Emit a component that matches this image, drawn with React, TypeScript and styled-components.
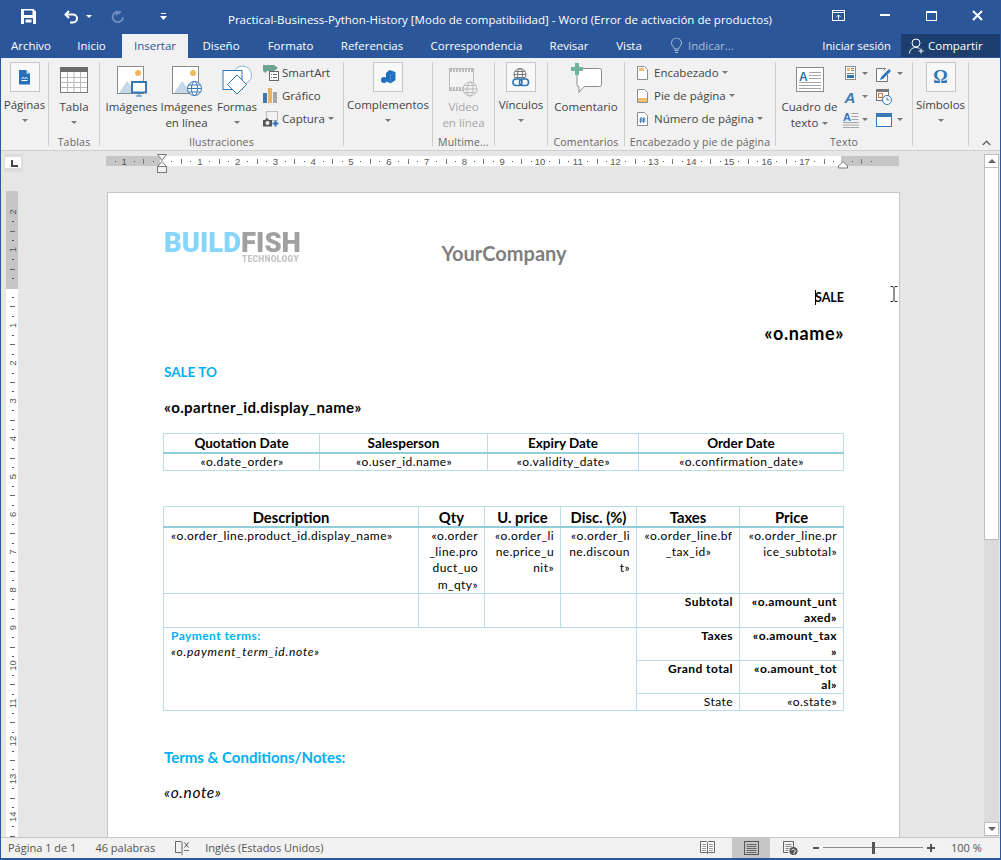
import React from 'react';
import styled, { createGlobalStyle } from 'styled-components';

const UI_FONT = '"Open Sans", "Noto Sans", sans-serif';
const DOC_FONT = 'Lato, "Liberation Sans", sans-serif';
const BLUE = '#2b579a';
const CYAN = '#00b0f0';

const GlobalStyle = createGlobalStyle`
  html, body {
    margin: 0;
    padding: 0;
    overflow: hidden;
    background: #e6e6e6;
  }
  * { box-sizing: border-box; }
  svg { display: block; flex: none; }
`;

const Window = styled.div`
  width: 1001px;
  height: 860px;
  display: flex;
  flex-direction: column;
  border-left: 1px solid ${BLUE};
  border-right: 1px solid ${BLUE};
  border-bottom: 2px solid ${BLUE};
  font-family: ${UI_FONT};
  font-size: 11.5px;
  color: #444;
  overflow: hidden;
`;

/* title bar */
const TitleBar = styled.div`
  height: 34px;
  flex: none;
  display: flex;
  align-items: center;
  padding-left: 13px;
  background: ${BLUE};
  color: #fff;
`;
const QatSlot = styled.div<{ $w: number; $ml?: number }>`
  width: ${p => p.$w}px;
  margin-left: ${p => p.$ml || 0}px;
  height: 34px;
  display: flex;
  align-items: center;
  justify-content: center;
  padding-bottom: 1px;
`;
const Title = styled.div`
  flex: 1;
  text-align: center;
  padding: 4px 0 0 14px;
  font-size: 11.5px;
  white-space: nowrap;
`;
const WinButton = styled.div`
  width: 46px;
  height: 34px;
  display: flex;
  align-items: center;
  justify-content: center;
  padding-bottom: 3px;
`;

/* tabs */
const TabBar = styled.div`
  height: 24px;
  flex: none;
  display: flex;
  background: ${BLUE};
  color: #fff;
`;
const Tab = styled.div<{ $w: number; $active?: boolean }>`
  width: ${p => p.$w}px;
  display: flex;
  align-items: center;
  justify-content: center;
  padding-bottom: 1px;
  font-size: 11.5px;
  background: ${p => (p.$active ? '#f1f1f1' : 'transparent')};
  color: ${p => (p.$active ? BLUE : '#fff')};
`;
const TellMe = styled.div`
  display: flex;
  align-items: center;
  gap: 6px;
  margin-left: 15px;
  padding-bottom: 1px;
  color: #a9bcd8;
`;
const SignIn = styled.div`
  margin-left: auto;
  margin-right: 10px;
  padding-bottom: 1px;
  display: flex;
  align-items: center;
  font-size: 11.3px;
`;
const Share = styled.div`
  width: 99px;
  height: 23px;
  display: flex;
  align-items: center;
  gap: 3px;
  padding-left: 8px;
  background: #1c3f70;
`;

/* ribbon */
const Ribbon = styled.div`
  height: 93px;
  flex: none;
  display: flex;
  padding-top: 4px;
  background: #f1f1f1;
  border-bottom: 1px solid #cfcfcf;
`;
const Group = styled.div<{ $w: number }>`
  width: ${p => p.$w}px;
  height: 84px;
  flex: none;
  display: flex;
  flex-direction: column;
  border-right: 1px solid #cdcdcd;
`;
const GroupBody = styled.div<{ $pl?: number }>`
  flex: 1;
  min-height: 0;
  display: flex;
  padding-left: ${p => p.$pl || 0}px;
`;
const GroupLabel = styled.div`
  height: 16px;
  line-height: 16px;
  margin-bottom: -4px;
  text-align: center;
  white-space: nowrap;
  overflow: hidden;
  font-size: 10.5px;
  color: #666;
  letter-spacing: 0.2px;
`;
const LargeButton = styled.div<{ $w?: number; $dim?: boolean }>`
  ${p => (p.$w ? `width: ${p.$w}px; flex: none;` : 'flex: 1;')}
  display: flex;
  flex-direction: column;
  align-items: center;
  line-height: 16px;
  white-space: nowrap;
  color: ${p => (p.$dim ? '#a6a6a6' : '#444')};
`;
const IconSlot = styled.div<{ $h: number; $pt?: number }>`
  height: ${p => p.$h}px;
  padding-top: ${p => p.$pt || 0}px;
  flex: none;
  display: flex;
  justify-content: center;
  align-items: flex-start;
`;
const IconBox = styled.div`
  width: 30px;
  height: 30px;
  display: flex;
  align-items: center;
  justify-content: center;
  background: #f8f8f8;
  border: 1px solid #c6c6c6;
`;
const Omega = styled.span`
  font-family: "Liberation Serif", serif;
  font-weight: 700;
  font-size: 18px;
  color: #2e75b6;
`;
const CaretRow = styled.div`
  height: 14px;
  display: flex;
  align-items: center;
  justify-content: center;
`;
const Caret = styled.span<{ $ml?: number; $color?: string }>`
  display: inline-block;
  flex: none;
  width: 0;
  height: 0;
  margin-left: ${p => p.$ml || 0}px;
  border-left: 3px solid transparent;
  border-right: 3px solid transparent;
  border-top: 3px solid ${p => p.$color || '#777'};
`;
const InlineLabel = styled.div`
  display: flex;
  align-items: center;
`;
const SmallColumn = styled.div<{ $ml?: number }>`
  margin: -1px 0 0 ${p => p.$ml || 0}px;
  display: flex;
  flex-direction: column;
`;
const SmallButton = styled.div`
  height: 23px;
  display: flex;
  align-items: center;
  white-space: nowrap;
`;
const SmallIcon = styled.span<{ $w: number }>`
  width: ${p => p.$w}px;
  flex: none;
  display: flex;
`;
const IconGrid = styled.div`
  display: grid;
  grid-template-columns: 33px 33px;
  grid-auto-rows: 23px;
`;
const IconCell = styled.div<{ $gap?: number }>`
  display: flex;
  align-items: center;
  gap: ${p => p.$gap || 3}px;
`;
const Collapse = styled.div`
  margin-left: 13px;
  align-self: flex-end;
  margin-bottom: 4px;
`;

/* workspace */
const Main = styled.div`
  flex: 1;
  min-height: 0;
  display: flex;
  background: #e6e6e6;
`;
const DocColumn = styled.div`
  flex: 1;
  min-width: 0;
  display: flex;
  flex-direction: column;
`;
const RulerRow = styled.div`
  height: 24px;
  flex: none;
  display: flex;
`;
const RulerCorner = styled.div`
  width: 19px;
  height: 18px;
  margin: 3px 0 0 3px;
  padding: 3px 2px 4px 1px;
  background: #dcdcdc;
  flex: none;
`;
const RulerCornerInner = styled.div`
  height: 11px;
  position: relative;
  background: #fff;
  &::after {
    content: '';
    position: absolute;
    left: 6px;
    top: 3px;
    width: 5px;
    height: 5px;
    border-left: 2px solid #444;
    border-bottom: 2px solid #444;
  }
`;
const HorizontalRuler = styled.div`
  margin-left: 83px;
`;
const DocRow = styled.div`
  flex: 1;
  min-height: 0;
  display: flex;
  overflow: hidden;
  padding: 17px 0 0 5px;
`;
const VerticalRuler = styled.div`
  margin-top: -1px;
  flex: none;
`;
const Page = styled.div`
  position: relative;
  width: 793px;
  height: 900px;
  flex: none;
  margin-left: 89px;
  padding: 38px 55px 0 56px;
  background: #fff;
  border: 1px solid #c6c6c6;
  font-family: ${DOC_FONT};
  color: #000;
`;
const LetterHead = styled.div`
  height: 33px;
  display: grid;
  grid-template-columns: 1fr auto 1fr;
`;
const Logo = styled.div`
  height: 30px;
  font-family: Roboto, "Liberation Sans", sans-serif;
  font-weight: 900;
  font-size: 27.5px;
  line-height: 24px;
  white-space: nowrap;
  filter: blur(0.3px);
`;
const LogoBlue = styled.span`
  display: inline-block;
  color: #86d6fb;
`;
const LogoGray = styled.span`
  display: inline-block;
  color: #a0a0a0;
`;
const LogoTag = styled.div`
  font-size: 8.4px;
  font-weight: 900;
  line-height: 8px;
  padding-left: 78px;
  letter-spacing: 0.3px;
  color: #c4c4c4;
`;
const CompanyName = styled.div`
  align-self: end;
  margin-bottom: 1px;
  font-size: 20px;
  font-weight: 700;
  line-height: 20px;
  color: #7f7f7f;
`;
const RightLine = styled.div<{ $mt: number; $size: number; $lh: number; $ls?: number }>`
  margin-top: ${p => p.$mt}px;
  text-align: right;
  font-weight: 700;
  font-size: ${p => p.$size}px;
  line-height: ${p => p.$lh}px;
  letter-spacing: ${p => p.$ls || 0}px;
`;
const TextCaret = styled.span`
  display: inline-block;
  width: 1px;
  height: 15px;
  margin-right: -1px;
  vertical-align: -3px;
  background: #000;
`;
const IBeam = styled.div`
  position: absolute;
  left: 782px;
  top: 93px;
`;
const Para = styled.div<{ $mt: number; $size: number; $ls?: number; $color?: string; $italic?: boolean }>`
  margin-top: ${p => p.$mt}px;
  font-size: ${p => p.$size}px;
  letter-spacing: ${p => p.$ls || 0}px;
  line-height: 20px;
  font-weight: ${p => (p.$italic ? 400 : 700)};
  font-style: ${p => (p.$italic ? 'italic' : 'normal')};
  color: ${p => p.$color || '#000'};
`;
const DataTable = styled.table<{ $mt: number }>`
  width: 680px;
  margin: ${p => p.$mt}px 0 0 -1px;
  border-collapse: collapse;
  table-layout: fixed;
  font-size: 12px;
  letter-spacing: 0.43px;
`;
const Col = styled.col<{ $w: number }>`
  width: ${p => p.$w}px;
`;
const HeadCell = styled.th<{ $size: number; $h: number }>`
  height: ${p => p.$h}px;
  padding: 1px 0 0;
  font-size: ${p => p.$size}px;
  letter-spacing: 0;
  line-height: 17px;
  font-weight: 700;
  text-align: center;
  border: 1px solid #b6dde8;
  border-bottom: 2px solid #92cddc;
`;
const Cell = styled.td<{ $h?: number; $align?: string; $bold?: boolean; $tight?: boolean }>`
  height: ${p => (p.$h ? `${p.$h}px` : 'auto')};
  padding: 0 6px 0 7px;
  line-height: ${p => (p.$tight ? 16 : 16.25)}px;
  vertical-align: top;
  white-space: nowrap;
  text-align: ${p => p.$align || 'left'};
  font-weight: ${p => (p.$bold ? 700 : 400)};
  border: 1px solid #b6dde8;
`;
const PaymentLabel = styled.div`
  font-weight: 700;
  color: ${CYAN};
`;
const PaymentNote = styled.div`
  font-style: italic;
  letter-spacing: 0.75px;
`;

/* scrollbar */
const Scrollbar = styled.div`
  width: 15px;
  margin: 3px 1px 0 0;
  flex: none;
  display: flex;
  flex-direction: column;
  background: #dcdcdc;
`;
const ScrollButton = styled.div`
  height: 14px;
  flex: none;
  display: flex;
  align-items: center;
  justify-content: center;
  background: #fff;
  border: 1px solid #bdbdbd;
`;
const ScrollThumb = styled.div`
  height: 372px;
  flex: none;
  margin-bottom: auto;
  background: #fff;
  border: 1px solid #bdbdbd;
  border-top: none;
`;
const ScrollBottomButton = styled(ScrollButton)`
  margin-bottom: 1px;
`;
const ArrowUp = styled.span`
  border-left: 4px solid transparent;
  border-right: 4px solid transparent;
  border-bottom: 4px solid #666;
`;
const ArrowDown = styled.span`
  border-left: 4px solid transparent;
  border-right: 4px solid transparent;
  border-top: 4px solid #666;
`;

/* status bar */
const StatusBar = styled.div`
  height: 21px;
  flex: none;
  display: flex;
  align-items: stretch;
  background: #f1f1f1;
  border-top: 1px solid #c6c6c6;
  font-size: 11px;
  color: #555;
`;
const StatusItem = styled.div<{ $ml: number }>`
  margin-left: ${p => p.$ml}px;
  padding-bottom: 1px;
  display: flex;
  align-items: center;
  white-space: nowrap;
`;
const ViewControls = styled.div`
  margin-left: auto;
  display: flex;
  align-items: stretch;
`;
const ViewButton = styled.div<{ $active?: boolean; $ml?: number }>`
  width: 38px;
  margin-left: ${p => p.$ml || 0}px;
  padding-bottom: 1px;
  display: flex;
  align-items: center;
  justify-content: center;
  background: ${p => (p.$active ? '#c6c6c6' : 'transparent')};
`;
const ZoomSign = styled.div<{ $ml: number }>`
  width: 12px;
  margin-left: ${p => p.$ml}px;
  padding-bottom: 1px;
  display: flex;
  align-items: center;
  justify-content: center;
`;
const ZoomTrack = styled.div`
  width: 100px;
  height: 19px;
  margin-left: 1px;
  display: flex;
  align-items: center;
  justify-content: center;
  background: linear-gradient(#8a8a8a, #8a8a8a) center / 100% 1px no-repeat;
`;
const ZoomThumb = styled.div`
  width: 3px;
  height: 12px;
  background: #555;
`;
const ZoomValue = styled.div`
  width: 49px;
  margin-left: 14px;
  padding-bottom: 1px;
  display: flex;
  align-items: center;
`;

/* drawings */
const Save = () => (
  <svg width="15" height="15" viewBox="0 0 15 15">
    <path fillRule="evenodd" fill="#fff" d="M0 0h12.5L15 2.5V15H0zM3 1.5V6h8.5V1.5zM3 9v6h9V9zM4.5 10.5h6V13.5h-6z" />
  </svg>
);
const Undo = () => (
  <svg width="15" height="14" viewBox="0 0 15 14">
    <path d="M5 1 1.5 4.5 5 8" fill="none" stroke="#fff" strokeWidth="2" />
    <path d="M2 4.5h7a4 4 0 0 1 0 8H6" fill="none" stroke="#fff" strokeWidth="2" />
  </svg>
);
const Redo = () => (
  <svg width="14" height="14" viewBox="0 0 14 14">
    <path d="M8.5 2A5.2 5.2 0 1 0 12 7" fill="none" stroke="#6c8cbc" strokeWidth="2" />
    <path d="M4 1h6v1.5L5 6z" fill="#6c8cbc" />
  </svg>
);
const CustomizeQat = () => (
  <svg width="7" height="7" viewBox="0 0 7 7">
    <path d="M1 0h5v1H1zM0 3h7L3.5 7z" fill="#fff" />
  </svg>
);
const RibbonDisplay = () => (
  <svg width="14" height="12" viewBox="0 0 14 12">
    <rect x="0.5" y="0.5" width="12" height="10" fill="none" stroke="#fff" />
    <path d="M1 2.5h11" stroke="#fff" />
    <path d="M6.5 9.5V5M4.5 7l2-2 2 2" fill="none" stroke="#fff" />
  </svg>
);
const Minimize = () => (
  <svg width="10" height="3" viewBox="0 0 10 3">
    <rect width="10" height="2" fill="#fff" />
  </svg>
);
const Maximize = () => (
  <svg width="11" height="10" viewBox="0 0 11 10">
    <rect x="0.5" y="0.5" width="10" height="9" fill="none" stroke="#fff" />
    <rect width="11" height="2" fill="#fff" />
  </svg>
);
const Close = () => (
  <svg width="11" height="11" viewBox="0 0 11 11">
    <path d="M1 1l9 9M10 1l-9 9" stroke="#fff" strokeWidth="2" />
  </svg>
);
const Bulb = () => (
  <svg width="11" height="16" viewBox="0 0 11 16">
    <path d="M3.5 11C3 8.5 .5 8 .5 5a5 5 0 0 1 10 0c0 3-2.5 3.5-3 6z" fill="none" stroke="#a9bcd8" />
    <path d="M3.5 12.5h4M4 14.5h3" stroke="#a9bcd8" />
  </svg>
);
const SharePerson = () => (
  <svg width="16" height="16" viewBox="0 0 16 16">
    <circle cx="7" cy="5" r="4" fill="none" stroke="#fff" />
    <path d="M.5 15.5c0-3.5 2.5-6 6.5-6 1.5 0 2.5.3 3.5 1" fill="none" stroke="#fff" />
    <path d="M12 10.5v5M9.5 13h5" stroke="#fff" />
  </svg>
);
const PagesIcon = () => (
  <svg width="12" height="15" viewBox="0 0 12 15">
    <path d="M0 0h7.5L11 3.5V14.5H0z" fill="#2a70b8" />
    <path d="M7.5 0 11 3.5H7.5z" fill="#d5e3f2" />
    <path d="M2.5 8.5l1.5-1 1.5 1 1.5-1 1.5 1" fill="none" stroke="#fff" />
    <path d="M2.5 10.5h6" stroke="#fff" />
  </svg>
);
const TableIcon = () => (
  <svg width="28" height="26" viewBox="0 0 28 26">
    <rect x="0.5" y="0.5" width="27" height="25" fill="#fff" stroke="#777" />
    <rect width="28" height="5" fill="#6a6a6a" />
    <path d="M1 10.5h26M1 15.5h26M1 20.5h26M7.5 5v20M14 5v20M20.5 5v20" stroke="#b9b9b9" />
  </svg>
);
const PictureFrame = () => (
  <>
    <rect x="0.5" y="0.5" width="26" height="27" fill="#fff" stroke="#8a8a8a" />
    <circle cx="21" cy="7" r="3" fill="#f0b860" />
    <path d="M2 27 10 15l7 9v3z" fill="#c5d8ea" />
  </>
);
const PicturesIcon = () => (
  <svg width="30" height="31" viewBox="0 0 30 31">
    <PictureFrame />
    <rect x="15" y="16" width="14" height="10.5" fill="#fff" stroke="#3a78b5" strokeWidth="2" />
    <path d="M22 27.5v2M19 30h6" stroke="#3a78b5" />
  </svg>
);
const OnlinePicturesIcon = () => (
  <svg width="30" height="31" viewBox="0 0 30 31">
    <PictureFrame />
    <circle cx="22.5" cy="22.5" r="7" fill="#fff" stroke="#3a78b5" />
    <ellipse cx="22.5" cy="22.5" rx="3" ry="7" fill="none" stroke="#3a78b5" />
    <path d="M15.5 22.5h14M16.5 19h12M16.5 26h12" stroke="#3a78b5" />
  </svg>
);
const ShapesIcon = () => (
  <svg width="30" height="32" viewBox="0 0 30 32">
    <circle cx="20.5" cy="10" r="9" fill="#fff" stroke="#8ab0d8" />
    <rect x="1" y="5.5" width="19" height="19" fill="#fff" stroke="#2e75b6" />
    <path d="M15 10 24.5 19.5 15 29 5.5 19.5z" fill="#fff" stroke="#2e75b6" />
  </svg>
);
const SmartArtIcon = () => (
  <svg width="16" height="16" viewBox="0 0 16 16">
    <path d="M0 0h11l4 3-4 3H4L2.5 8 0 6z" fill="#6fa28f" />
    <rect x="6.5" y="6.5" width="9" height="9" fill="#fff" stroke="#666" />
    <path d="M8 9.5h1M10 9.5h4M8 12.5h1M10 12.5h4" stroke="#666" />
  </svg>
);
const ChartIcon = () => (
  <svg width="15" height="15" viewBox="0 0 15 15">
    <rect y="5" width="4" height="10" fill="#3f78b3" />
    <rect x="5" width="4" height="15" fill="#e6b26a" />
    <rect x="10" y="4" width="4" height="11" fill="#a6a6a6" />
  </svg>
);
const CaptureIcon = () => (
  <svg width="16" height="16" viewBox="0 0 16 16">
    <rect x="3.5" y="0.5" width="11" height="9" fill="none" stroke="#888" strokeDasharray="1 1" />
    <rect x="0" y="9" width="9" height="6.5" fill="#555" />
    <rect x="2.5" y="7.5" width="3" height="2" fill="#555" />
    <circle cx="4.5" cy="12" r="2" fill="#eee" />
    <path d="M12.5 9.5v6M9.5 12.5h6" stroke="#2e75b6" strokeWidth="2" />
  </svg>
);
const AddInsIcon = () => (
  <svg width="15" height="14" viewBox="0 0 15 14">
    <path d="M8.5 0 14.5 2v8l-5 3.5L5 11V3z" fill="#1e70bf" />
    <path d="M9.5 5 14.5 2.5M9.5 5v8" stroke="#5aa0de" strokeWidth="0.6" />
    <circle cx="3" cy="10" r="3" fill="#1e70bf" />
  </svg>
);
const VideoIcon = () => (
  <svg width="29" height="30" viewBox="0 0 29 30">
    <rect x="0.5" y="0.5" width="24" height="22" fill="#f4f4f4" stroke="#bbb" />
    <path d="M1 2.5h23M1 20.5h23" stroke="#bbb" strokeWidth="3" strokeDasharray="2 1" />
    <circle cx="21" cy="21" r="7" fill="#f1f1f1" stroke="#bbb" />
    <ellipse cx="21" cy="21" rx="3" ry="7" fill="none" stroke="#bbb" />
    <path d="M14 21h14M15 17.5h12M15 24.5h12" stroke="#bbb" />
  </svg>
);
const LinksIcon = () => (
  <svg width="18" height="19" viewBox="0 0 18 19">
    <circle cx="8" cy="6.5" r="6" fill="#f8f8f8" stroke="#777" />
    <ellipse cx="8" cy="6.5" rx="2.5" ry="6" fill="none" stroke="#777" />
    <path d="M2 6.5h12M3 3.5h10M3 9.5h10" stroke="#777" />
    <rect x="1" y="11" width="9" height="6.5" rx="3" fill="#f8f8f8" stroke="#2e75b6" strokeWidth="1.6" />
    <rect x="7.5" y="11" width="9" height="6.5" rx="3" fill="none" stroke="#2e75b6" strokeWidth="1.6" />
  </svg>
);
const CommentIcon = () => (
  <svg width="31" height="31" viewBox="0 0 31 31">
    <path d="M8.5 5.5h20a2 2 0 0 1 2 2v14a2 2 0 0 1-2 2H13l-5 6v-6H8a2 2 0 0 1-2-2V8a2 2 0 0 1 2.5-2.5z" fill="#fff" stroke="#8c8c8c" />
    <path d="M6 0v12M0 6h12" stroke="#6fb39f" strokeWidth="4" />
  </svg>
);
const PageOutline = () => <path d="M.5.5h7l3 3v10H.5z" fill="#fff" stroke="#8c8c8c" />;
const HeaderIcon = () => (
  <svg width="11" height="14" viewBox="0 0 11 14">
    <PageOutline />
    <rect x="2" y="2" width="5" height="3" fill="#f0c070" />
  </svg>
);
const FooterIcon = () => (
  <svg width="11" height="14" viewBox="0 0 11 14">
    <PageOutline />
    <rect x="1" y="9" width="9" height="4" fill="#f0c070" />
  </svg>
);
const PageNumberIcon = () => (
  <svg width="11" height="14" viewBox="0 0 11 14">
    <PageOutline />
    <path d="M4 5 3.5 11M7 5 6.5 11M2.5 7h6M2.5 9h6" stroke="#2e75b6" />
  </svg>
);
const TextBoxIcon = () => (
  <svg width="28" height="26" viewBox="0 0 28 26">
    <rect x="0.5" y="0.5" width="27" height="24" fill="#fff" stroke="#8a8a8a" />
    <text x="3" y="14" fontFamily="Liberation Sans" fontWeight="700" fontSize="12" fill="#2e75b6">A</text>
    <path d="M13 5.5h12M13 8.5h12M13 11.5h12M3 15.5h22M3 18.5h22M3 21.5h22" stroke="#a6a6a6" />
  </svg>
);
const QuickPartsIcon = () => (
  <svg width="16" height="15" viewBox="0 0 16 15">
    <rect x="2.5" y="0.5" width="10" height="13" fill="#fff" stroke="#8c8c8c" />
    <rect x="4" y="2" width="3" height="3" fill="#f0b860" />
    <path d="M8 2.5h3M8 4.5h3M4 7.5h7" stroke="#777" />
    <rect x="4" y="9" width="7" height="3" fill="#2e75b6" />
  </svg>
);
const SignatureIcon = () => (
  <svg width="16" height="16" viewBox="0 0 16 16">
    <path d="M.5 2.5h9l-2 2M.5 2.5v13h11V9" fill="#fff" stroke="#777" />
    <path d="M5 11 13 3l2 2-8 8-3 1z" fill="#2e75b6" />
  </svg>
);
const WordArtIcon = () => (
  <svg width="16" height="16" viewBox="0 0 16 16">
    <text x="1.5" y="13.5" fontFamily="Liberation Sans" fontWeight="700" fontStyle="italic" fontSize="15" fill="#3a78b5">A</text>
  </svg>
);
const DateIcon = () => (
  <svg width="16" height="16" viewBox="0 0 16 16">
    <rect x="0.5" y="0.5" width="12" height="11" fill="#fff" stroke="#777" />
    <rect width="13" height="3" fill="#777" />
    <rect x="2.5" y="4.5" width="4" height="4" fill="none" stroke="#d9742b" />
    <circle cx="11" cy="11" r="4.5" fill="#fff" stroke="#2e75b6" />
    <path d="M11 8.5V11h2.5" fill="none" stroke="#2e75b6" />
  </svg>
);
const DropCapIcon = () => (
  <svg width="16" height="16" viewBox="0 0 16 16">
    <text x="0" y="9" fontFamily="Liberation Sans" fontWeight="700" fontSize="11" fill="#2e75b6">A</text>
    <path d="M8.5 1.5h7M8.5 4.5h7M8.5 7.5h7M0 10.5h16M0 13h16M0 15.5h16" stroke="#a6a6a6" />
  </svg>
);
const ObjectIcon = () => (
  <svg width="16" height="14" viewBox="0 0 16 14">
    <rect x="0.5" y="0.5" width="15" height="13" fill="#fff" stroke="#3a78b5" />
    <rect width="16" height="4" fill="#3a78b5" />
  </svg>
);
const ChevronUp = () => (
  <svg width="9" height="6" viewBox="0 0 9 6">
    <path d="M.7 5 4.5 1.3 8.3 5" fill="none" stroke="#666" strokeWidth="1.4" />
  </svg>
);
const BookCross = () => (
  <svg width="15" height="14" viewBox="0 0 15 14">
    <path d="M6 .5H.5v11H6M7 .5V14" fill="none" stroke="#666" />
    <path d="M9.5 1.5l4 5M13.5 1.5l-4 5" stroke="#555" />
    <path d="M9 9.5h5" stroke="#777" />
  </svg>
);
const ReadMode = () => (
  <svg width="15" height="14" viewBox="0 0 15 14">
    <path d="M.5.5h6l1 1 1-1h6v11h-6l-1 1-1-1h-6zM7.5 1.5v11" fill="#fff" stroke="#666" />
    <path d="M2 3.5h4M2 5.5h4M2 7.5h4M2 9.5h4M9 3.5h4M9 5.5h4M9 7.5h4M9 9.5h4" stroke="#999" />
  </svg>
);
const PrintLayout = () => (
  <svg width="15" height="14" viewBox="0 0 15 14">
    <rect x="0.5" y="0.5" width="14" height="13" fill="none" stroke="#555" />
    <path d="M2.5 3.5h10M2.5 5.5h10M2.5 7.5h10M2.5 9.5h10M2.5 11.5h10" stroke="#666" />
  </svg>
);
const WebLayout = () => (
  <svg width="15" height="14" viewBox="0 0 15 14">
    <path d="M.5.5h10v7M.5.5v11h5" fill="none" stroke="#666" />
    <path d="M2.5 3.5h6M2.5 5.5h6M2.5 7.5h4M2.5 9.5h3" stroke="#888" />
    <circle cx="10.5" cy="10" r="4" fill="#555" />
    <path d="M8.5 9l2-1 2 2-2 3" fill="none" stroke="#eee" />
  </svg>
);
const ZoomMinus = () => (
  <svg width="6" height="2" viewBox="0 0 6 2">
    <rect width="6" height="2" fill="#555" />
  </svg>
);
const ZoomPlus = () => (
  <svg width="8" height="8" viewBox="0 0 8 8">
    <path d="M0 3h8v2H0zM3 0h2v8H3z" fill="#555" />
  </svg>
);
const IBeamCursor = () => (
  <svg width="8" height="16" viewBox="0 0 8 16">
    <path d="M.5.5h2.5l1 1 1-1h2.5M.5 15.5h2.5l1-1 1 1h2.5M4 1.5v13" fill="none" stroke="#222" />
  </svg>
);

const CM = 37.8;
const QUARTERS = Array.from({ length: 84 }, (_, i) => i - 8);

const TopRuler = () => {
  const origin = 56;
  return (
    <svg width="794" height="24" viewBox="0 0 794 24">
      <rect x="0" y="5" width="54" height="10" fill="#c6c6c6" />
      <rect x="54" y="5" width="681" height="10" fill="#fff" />
      <rect x="735" y="5" width="58" height="10" fill="#c6c6c6" />
      {QUARTERS.map(q => {
        const x = origin + (q * CM) / 4;
        if (x < 0 || x > 793 || q === 0 || q === 72) return null;
        if (q % 4 === 0) {
          return (
            <text key={q} x={x} y="13.5" textAnchor="middle" fontFamily="Liberation Sans" fontSize="9.5" fill="#555">
              {Math.abs(q / 4)}
            </text>
          );
        }
        if (q % 2 !== 0) return <rect key={q} x={Math.round(x)} y="10" width="1" height="1" fill="#555" />;
        return <rect key={q} x={Math.round(x)} y="8" width="1" height="5" fill="#777" />;
      })}
      <path d="M51.5 3.5h9L56 9.5zM56 10.5l4.5 5h-9z" fill="#fff" stroke="#777" />
      <rect x="51.5" y="15.5" width="9" height="6" fill="#f1f1f1" stroke="#777" />
      <path d="M737 10.5l4.5 4.5v2h-9v-2z" fill="#fff" stroke="#777" />
    </svg>
  );
};

const SideRuler = () => {
  const origin = 96.5;
  return (
    <svg width="12" height="646" viewBox="0 0 12 646">
      <rect width="12" height="98" fill="#c6c6c6" />
      <rect y="98" width="12" height="548" fill="#fff" />
      {QUARTERS.map(q => {
        const y = origin + (q * CM) / 4;
        if (y < 0 || y > 646 || q === 0) return null;
        if (q % 4 === 0) {
          return (
            <text
              key={q}
              x="6.5"
              y={y}
              transform={`rotate(-90 6.5 ${y})`}
              dy="3.3"
              textAnchor="middle"
              fontFamily="Liberation Sans"
              fontSize="9.5"
              fill="#555"
            >
              {Math.abs(q / 4)}
            </text>
          );
        }
        if (q % 2 !== 0) return <rect key={q} x="6" y={Math.round(y)} width="2" height="1" fill="#555" />;
        return <rect key={q} x="4" y={Math.round(y)} width="5" height="1" fill="#666" />;
      })}
    </svg>
  );
};

const Large = ({
  icon,
  lines,
  boxed,
  caret,
  inlineCaret,
  dim,
  w,
  pt,
}: {
  icon: React.ReactNode;
  lines: string[];
  boxed?: boolean;
  caret?: boolean;
  inlineCaret?: boolean;
  dim?: boolean;
  w?: number;
  pt?: number;
}) => (
  <LargeButton $w={w} $dim={dim}>
    <IconSlot $h={boxed ? 35 : 37} $pt={pt}>{boxed ? <IconBox>{icon}</IconBox> : icon}</IconSlot>
    {lines.map((line, i) => (
      <InlineLabel key={line}>
        {line}
        {inlineCaret && i === lines.length - 1 && <Caret $ml={4} />}
      </InlineLabel>
    ))}
    {caret && (
      <CaretRow>
        <Caret />
      </CaretRow>
    )}
  </LargeButton>
);

const Small = ({ icon, label, caret, w = 19 }: { icon: React.ReactNode; label: string; caret?: boolean; w?: number }) => (
  <SmallButton>
    <SmallIcon $w={w}>{icon}</SmallIcon>
    {label}
    {caret && <Caret $ml={3} />}
  </SmallButton>
);

const App = () => (
  <>
    <GlobalStyle />
    <Window>
      <TitleBar>
        <QatSlot $w={28}><Save /></QatSlot>
        <QatSlot $w={26} $ml={16}><Undo /></QatSlot>
        <QatSlot $w={10}><Caret $color="#fff" /></QatSlot>
        <QatSlot $w={24} $ml={12}><Redo /></QatSlot>
        <QatSlot $w={14} $ml={26}><CustomizeQat /></QatSlot>
        <Title>Practical-Business-Python-History [Modo de compatibilidad] - Word (Error de activación de productos)</Title>
        <WinButton><RibbonDisplay /></WinButton>
        <WinButton><Minimize /></WinButton>
        <WinButton><Maximize /></WinButton>
        <WinButton><Close /></WinButton>
      </TitleBar>

      <TabBar>
        <Tab $w={60}>Archivo</Tab>
        <Tab $w={61}>Inicio</Tab>
        <Tab $w={66} $active>Insertar</Tab>
        <Tab $w={66}>Diseño</Tab>
        <Tab $w={73}>Formato</Tab>
        <Tab $w={90}>Referencias</Tab>
        <Tab $w={119}>Correspondencia</Tab>
        <Tab $w={66}>Revisar</Tab>
        <Tab $w={54}>Vista</Tab>
        <TellMe><Bulb />Indicar...</TellMe>
        <SignIn>Iniciar sesión</SignIn>
        <Share><SharePerson />Compartir</Share>
      </TabBar>

      <Ribbon>
        <Group $w={48}>
          <GroupBody>
            <Large boxed caret icon={<PagesIcon />} lines={['Páginas']} />
          </GroupBody>
          <GroupLabel>&nbsp;</GroupLabel>
        </Group>
        <Group $w={51}>
          <GroupBody>
            <Large caret pt={5} icon={<TableIcon />} lines={['Tabla']} />
          </GroupBody>
          <GroupLabel>Tablas</GroupLabel>
        </Group>
        <Group $w={244}>
          <GroupBody $pl={4}>
            <Large w={55} pt={4} icon={<PicturesIcon />} lines={['Imágenes']} />
            <Large w={55} pt={4} icon={<OnlinePicturesIcon />} lines={['Imágenes', 'en línea']} />
            <Large w={46} pt={3} caret icon={<ShapesIcon />} lines={['Formas']} />
            <SmallColumn $ml={3}>
              <Small icon={<SmartArtIcon />} label="SmartArt" />
              <Small icon={<ChartIcon />} label="Gráfico" />
              <Small icon={<CaptureIcon />} label="Captura" caret />
            </SmallColumn>
          </GroupBody>
          <GroupLabel>Ilustraciones</GroupLabel>
        </Group>
        <Group $w={89}>
          <GroupBody>
            <Large boxed caret icon={<AddInsIcon />} lines={['Complementos']} />
          </GroupBody>
          <GroupLabel>&nbsp;</GroupLabel>
        </Group>
        <Group $w={62}>
          <GroupBody>
            <Large dim pt={6} icon={<VideoIcon />} lines={['Vídeo', 'en línea']} />
          </GroupBody>
          <GroupLabel>Multime...</GroupLabel>
        </Group>
        <Group $w={53}>
          <GroupBody>
            <Large boxed caret icon={<LinksIcon />} lines={['Vínculos']} />
          </GroupBody>
          <GroupLabel>&nbsp;</GroupLabel>
        </Group>
        <Group $w={77}>
          <GroupBody>
            <Large pt={1} icon={<CommentIcon />} lines={['Comentario']} />
          </GroupBody>
          <GroupLabel>Comentarios</GroupLabel>
        </Group>
        <Group $w={151}>
          <GroupBody $pl={12}>
            <SmallColumn>
              <Small w={17} icon={<HeaderIcon />} label="Encabezado" caret />
              <Small w={17} icon={<FooterIcon />} label="Pie de página" caret />
              <Small w={17} icon={<PageNumberIcon />} label="Número de página" caret />
            </SmallColumn>
          </GroupBody>
          <GroupLabel>Encabezado y pie de página</GroupLabel>
        </Group>
        <Group $w={137}>
          <GroupBody>
            <Large w={67} pt={5} inlineCaret icon={<TextBoxIcon />} lines={['Cuadro de', 'texto']} />
            <IconGrid>
              <IconCell><QuickPartsIcon /><Caret /></IconCell>
              <IconCell $gap={5}><SignatureIcon /><Caret /></IconCell>
              <IconCell><WordArtIcon /><Caret /></IconCell>
              <IconCell><DateIcon /></IconCell>
              <IconCell><DropCapIcon /><Caret /></IconCell>
              <IconCell $gap={5}><ObjectIcon /><Caret /></IconCell>
            </IconGrid>
          </GroupBody>
          <GroupLabel>Texto</GroupLabel>
        </Group>
        <Group $w={56}>
          <GroupBody>
            <Large boxed caret icon={<Omega>Ω</Omega>} lines={['Símbolos']} />
          </GroupBody>
          <GroupLabel>&nbsp;</GroupLabel>
        </Group>
        <Collapse><ChevronUp /></Collapse>
      </Ribbon>

      <Main>
        <DocColumn>
          <RulerRow>
            <RulerCorner><RulerCornerInner /></RulerCorner>
            <HorizontalRuler><TopRuler /></HorizontalRuler>
          </RulerRow>
          <DocRow>
            <VerticalRuler><SideRuler /></VerticalRuler>
            <Page>
              <LetterHead>
                <Logo>
                  <LogoBlue>BUILD</LogoBlue><LogoGray>FISH</LogoGray>
                  <LogoTag>TECHNOLOGY</LogoTag>
                </Logo>
                <CompanyName>YourCompany</CompanyName>
                <div />
              </LetterHead>
              <RightLine $mt={25} $size={12.5} $lh={18}><TextCaret />SALE</RightLine>
              <RightLine $mt={14} $size={18} $lh={24} $ls={0.6}>«o.name»</RightLine>
              <Para $mt={17} $size={13.5} $color={CYAN}>SALE TO</Para>
              <Para $mt={15} $size={15} $ls={0.35}>«o.partner_id.display_name»</Para>
              <DataTable $mt={16}>
                <colgroup>
                  <Col $w={156} /><Col $w={168} /><Col $w={151} /><Col $w={205} />
                </colgroup>
                <thead>
                  <tr>
                    <HeadCell $h={19} $size={13.5}>Quotation Date</HeadCell>
                    <HeadCell $h={19} $size={13.5}>Salesperson</HeadCell>
                    <HeadCell $h={19} $size={13.5}>Expiry Date</HeadCell>
                    <HeadCell $h={19} $size={13.5}>Order Date</HeadCell>
                  </tr>
                </thead>
                <tbody>
                  <tr>
                    <Cell $h={17} $align="center">«o.date_order»</Cell>
                    <Cell $align="center">«o.user_id.name»</Cell>
                    <Cell $align="center">«o.validity_date»</Cell>
                    <Cell $align="center">«o.confirmation_date»</Cell>
                  </tr>
                </tbody>
              </DataTable>
              <DataTable $mt={35}>
                <colgroup>
                  <Col $w={255} /><Col $w={66} /><Col $w={76} /><Col $w={76} /><Col $w={103} /><Col $w={104} />
                </colgroup>
                <thead>
                  <tr>
                    <HeadCell $h={20} $size={14.8}>Description</HeadCell>
                    <HeadCell $h={20} $size={14.8}>Qty</HeadCell>
                    <HeadCell $h={20} $size={14.8}>U. price</HeadCell>
                    <HeadCell $h={20} $size={14.8}>Disc. (%)</HeadCell>
                    <HeadCell $h={20} $size={14.8}>Taxes</HeadCell>
                    <HeadCell $h={20} $size={14.8}>Price</HeadCell>
                  </tr>
                </thead>
                <tbody>
                  <tr>
                    <Cell $h={66}>«o.order_line.product_id.display_name»</Cell>
                    <Cell $align="right">«o.order<br />_line.pro<br />duct_uo<br />m_qty»</Cell>
                    <Cell $align="right">«o.order_li<br />ne.price_u<br />nit»</Cell>
                    <Cell $align="right">«o.order_li<br />ne.discoun<br />t»</Cell>
                    <Cell $align="center">«o.order_line.bf<br />_tax_id»</Cell>
                    <Cell $align="right">«o.order_line.pr<br />ice_subtotal»</Cell>
                  </tr>
                  <tr>
                    <Cell $h={34} />
                    <Cell />
                    <Cell />
                    <Cell />
                    <Cell $align="right" $bold>Subtotal</Cell>
                    <Cell $align="right" $bold>«o.amount_unt<br />axed»</Cell>
                  </tr>
                  <tr>
                    <Cell $h={33} colSpan={4} rowSpan={3}>
                      <PaymentLabel>Payment terms:</PaymentLabel>
                      <PaymentNote>«o.payment_term_id.note»</PaymentNote>
                    </Cell>
                    <Cell $align="right" $bold $tight>Taxes</Cell>
                    <Cell $align="right" $bold $tight>«o.amount_tax<br />»</Cell>
                  </tr>
                  <tr>
                    <Cell $h={33} $align="right" $bold $tight>Grand total</Cell>
                    <Cell $align="right" $bold $tight>«o.amount_tot<br />al»</Cell>
                  </tr>
                  <tr>
                    <Cell $h={17} $align="right">State</Cell>
                    <Cell $align="right">«o.state»</Cell>
                  </tr>
                </tbody>
              </DataTable>
              <Para $mt={36} $size={15} $color={CYAN}>Terms &amp; Conditions/Notes:</Para>
              <Para $mt={15} $size={15.5} $ls={0.6} $italic>«o.note»</Para>
              <IBeam><IBeamCursor /></IBeam>
            </Page>
          </DocRow>
        </DocColumn>
        <Scrollbar>
          <ScrollButton><ArrowUp /></ScrollButton>
          <ScrollThumb />
          <ScrollBottomButton><ArrowDown /></ScrollBottomButton>
        </Scrollbar>
      </Main>

      <StatusBar>
        <StatusItem $ml={7}>Página 1 de 1</StatusItem>
        <StatusItem $ml={19}>46 palabras</StatusItem>
        <StatusItem $ml={20}><BookCross /></StatusItem>
        <StatusItem $ml={15}>Inglés (Estados Unidos)</StatusItem>
        <ViewControls>
          <ViewButton><ReadMode /></ViewButton>
          <ViewButton $active $ml={6}><PrintLayout /></ViewButton>
          <ViewButton $ml={1}><WebLayout /></ViewButton>
          <ZoomSign $ml={1}><ZoomMinus /></ZoomSign>
          <ZoomTrack><ZoomThumb /></ZoomTrack>
          <ZoomSign $ml={2}><ZoomPlus /></ZoomSign>
          <ZoomValue>100 %</ZoomValue>
        </ViewControls>
      </StatusBar>
    </Window>
  </>
);

export default App;
